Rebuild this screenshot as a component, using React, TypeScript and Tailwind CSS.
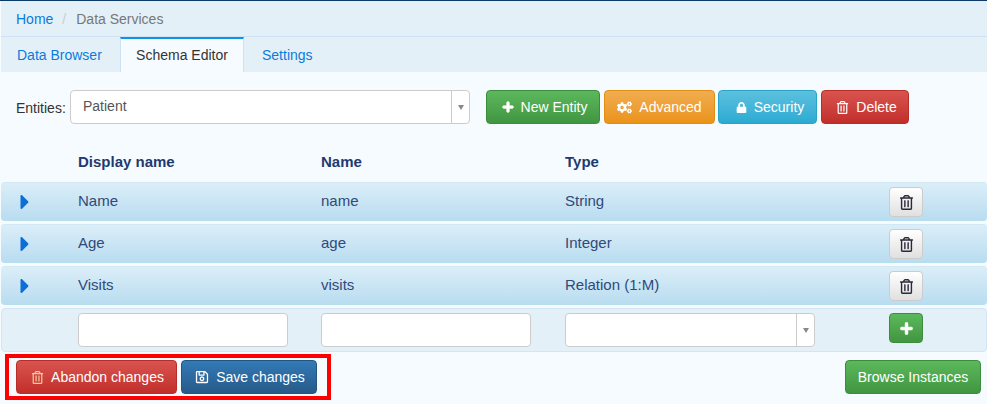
import type { ReactNode } from "react";
import { FaCaretRight, FaCogs, FaLock, FaPlus, FaRegSave, FaRegTrashAlt } from "react-icons/fa";

const FIELDS = [
  { display: "Name", name: "name", type: "String" },
  { display: "Age", name: "age", type: "Integer" },
  { display: "Visits", name: "visits", type: "Relation (1:M)" },
];

const ROW_GRID = "grid grid-cols-[76px_244px_244px_324px_34px] items-center";
const EDIT_GRID = "grid grid-cols-[76px_243px_244px_324px_34px] items-center";

const GREEN = "border-[#3d8b3d] bg-gradient-to-b from-[#5cb85c] to-[#419641]";
const ORANGE = "border-[#e38d13] bg-gradient-to-b from-[#f0ad4e] to-[#eb9316]";
const BLUE = "border-[#28a4c9] bg-gradient-to-b from-[#5bc0de] to-[#2aabd2]";
const RED = "border-[#b92c28] bg-gradient-to-b from-[#d9534f] to-[#c12e2a]";
const NAVY = "border-[#245580] bg-gradient-to-b from-[#337ab7] to-[#265a88]";

function ActionButton({ color, icon, width, children }: { color: string; icon?: ReactNode; width: string; children: ReactNode }) {
  return (
    <button
      type="button"
      className={`flex h-[34px] items-center justify-center gap-[7px] rounded border text-[14px] text-white ${color} ${width}`}
    >
      {icon}
      {children}
    </button>
  );
}

function SelectBox({ className, children }: { className: string; children?: ReactNode }) {
  return (
    <div className={`flex h-[34px] items-center rounded border border-[#ccc] bg-white ${className}`}>
      <span className="flex-1 pb-[3px] pl-3 text-[14px] leading-[28px] text-[#555]">{children}</span>
      <span className="flex h-full w-[18px] items-center justify-center border-l border-[#ccc]">
        <span className="h-0 w-0 border-x-[3.5px] border-t-[5px] border-x-transparent border-t-[#888]" />
      </span>
    </div>
  );
}

export default function App() {
  return (
    <div className="h-[404px] w-[987px] overflow-hidden border-t border-[#0b3a66] bg-[#f6fbff] pl-px font-['Liberation_Sans',sans-serif] text-[14px]">
      <div className="flex h-[36px] items-center gap-[9px] border-b border-[#cfe2f5] bg-[#e3f0f8] pl-[15px] pt-px">
        <span className="text-[#0c7bdc]">Home</span>
        <span className="text-[#ccc]">/</span>
        <span className="ml-px text-[#777]">Data Services</span>
      </div>

      <div className="flex h-[35px] bg-[#e3f0f8]">
        <div className="flex w-[119px] items-center pl-4 pt-px text-[#0c7bdc]">Data Browser</div>
        <div className="flex w-[124px] items-center justify-center border-x border-t-2 border-x-[#cfe2f5] border-t-[#0c95e8] bg-[#f6fbff] text-[#333]">
          Schema Editor
        </div>
        <div className="flex items-center pl-[18px] pt-px text-[#0c7bdc]">Settings</div>
      </div>

      <div className="flex items-center pl-[15px] pt-[18px]">
        <label className="w-[54px] pt-[2px] text-[#333]">Entities:</label>
        <SelectBox className="w-[400px]">Patient</SelectBox>
        <div className="ml-4 flex gap-[3.5px]">
          <ActionButton color={GREEN} width="w-[114px] pl-[2px]" icon={<FaPlus className="ml-px size-[12px] stroke-white stroke-[40px]" />}>New Entity</ActionButton>
          <ActionButton color={ORANGE} width="w-[111px]" icon={<FaCogs className="ml-px size-[15px]" />}>Advanced</ActionButton>
          <ActionButton color={BLUE} width="w-[99px]" icon={<FaLock className="ml-[5px] size-[11px]" />}>Security</ActionButton>
          <ActionButton color={RED} width="w-[88px]" icon={<FaRegTrashAlt className="ml-[4px] size-[13px]" />}>Delete</ActionButton>
        </div>
      </div>

      <div className={`${ROW_GRID} h-[58px] pt-[18px] text-[15px] font-bold text-[#1f3a6e]`}>
        <span className="col-start-2 ml-px">Display name</span>
        <span>Name</span>
        <span>Type</span>
      </div>

      <div className="flex flex-col gap-[3px]">
        {FIELDS.map((field) => (
          <div
            key={field.name}
            className={`${ROW_GRID} h-[39px] rounded-sm border-t border-[#d3e8f5] bg-gradient-to-b from-[#dbeef8] to-[#b8dcf0] text-[15px] text-[#2f4a7a]`}
          >
            <FaCaretRight className="mb-px ml-[12px] size-[24px] text-[#0c6fd6]" />
            <span className="ml-px pb-px">{field.display}</span>
            <span className="pb-px">{field.name}</span>
            <span className="pb-px">{field.type}</span>
            <button
              type="button"
              className="flex h-[30px] w-[34px] items-center justify-center rounded border border-[#ccc] bg-gradient-to-b from-white to-[#e0e0e0]"
            >
              <FaRegTrashAlt className="size-[15px] text-[#2a2a3a]" />
            </button>
          </div>
        ))}

        <div className={`${EDIT_GRID} h-[44px] rounded-sm border border-[#d3e4f3] bg-[#e3f0f8]`}>
          <input className="col-start-2 h-[34px] w-[210px] rounded border border-[#ccc] bg-white" aria-label="Display name" />
          <input className="h-[34px] w-[210px] rounded border border-[#ccc] bg-white" aria-label="Name" />
          <SelectBox className="w-[250px]" />
          <button
            type="button"
            className={`mb-[4px] flex h-[30px] w-[34px] items-center justify-center rounded border ${GREEN}`}
          >
            <FaPlus className="size-[13px] stroke-white stroke-[40px] text-white" />
          </button>
        </div>
      </div>

      <div className="flex items-center justify-between pr-[6px] pt-[2px]">
        <div className="ml-[4px] flex gap-[4px] border-[4px] border-[#ff0000] py-[2px] pl-[7px] pr-[10px]">
          <ActionButton color={RED} width="w-[161px] pl-[2px]" icon={<FaRegTrashAlt className="size-[13px] text-[#f5c9a0]" />}>Abandon changes</ActionButton>
          <ActionButton color={NAVY} width="w-[136px] pl-[2px]" icon={<FaRegSave className="size-[14px]" />}>Save changes</ActionButton>
        </div>
        <ActionButton color={GREEN} width="w-[136px]">Browse Instances</ActionButton>
      </div>
    </div>
  );
}
